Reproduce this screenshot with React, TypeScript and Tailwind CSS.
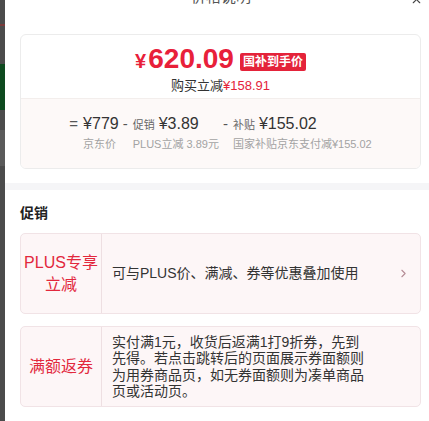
import { ChevronRight, X } from 'lucide-react'

const font = { fontFamily: '"Liberation Sans", "Noto Sans CJK SC", sans-serif' }

function PriceTerm({ sign, tag, value, note }: { sign?: string; tag?: string; value: string; note: string }) {
  return (
    <div className="flex items-start">
      {sign && <span className="mr-[5px] text-[15px] leading-[24px] text-[#555]">{sign}</span>}
      <div className="flex flex-col">
        <div className="flex items-baseline whitespace-nowrap">
          {tag && <span className="mr-[4px] text-[11px] text-[#666]">{tag}</span>}
          <span className="text-[16px] leading-[24px] text-[#333]">{value}</span>
        </div>
        <span className="whitespace-nowrap text-[11px] leading-[16px] text-[#a3a3a3]">{note}</span>
      </div>
    </div>
  )
}

function PromoRow({ label, children, arrow }: { label: React.ReactNode; children: React.ReactNode; arrow?: boolean }) {
  return (
    <div className="flex h-[81px] rounded-[5px] border border-[#f1e3e6] bg-[#fdf6f7]">
      <div className="flex w-[81px] shrink-0 items-center justify-center border-r border-[#eedfe2] text-center text-[16px] leading-[22px] text-[#e2283d]">
        {label}
      </div>
      <div className="flex flex-1 items-center pl-[10px] pr-[10px] text-[14px] text-[#333]">
        <div className="flex-1">{children}</div>
        {arrow && <ChevronRight size={13} strokeWidth={2} className="text-[#b48c95]" />}
      </div>
    </div>
  )
}

export default function App() {
  return (
    <div className="flex h-[421px] w-[429px] overflow-hidden bg-[#4b4b4b]" style={font}>
      {/* page behind the sheet */}
      <div className="flex w-[5px] shrink-0 flex-col">
        <div className="h-[24px]" />
        <div className="h-[2px] bg-[#7a3a3a]" />
        <div className="h-[38px]" />
        <div className="h-[46px] bg-[#0e4a1f]" />
        <div className="h-[20px]" />
        <div className="h-[36px] bg-[#5a5a5a]" />
      </div>

      <div className="flex flex-1 flex-col bg-white pl-[15px] pr-[8px]">
        <div className="flex h-[34px] items-start justify-between">
          <div className="w-[12px]" />
          <span className="-mt-[11px] text-[15px] leading-[16px] text-[#555]">价格说明</span>
          <X size={13} strokeWidth={2} className="-mt-[7px] -mr-[2px] text-[#444]" />
        </div>

        <div className="overflow-hidden rounded-[6px] border border-[#ececec]">
          <div className="flex h-[63px] flex-col items-center pt-[8px]">
            <div className="flex items-center">
              <span className="flex items-baseline leading-[32px] text-[#e8203a]">
                <span className="mr-[2px] text-[20px] font-bold">¥</span>
                <span className="text-[28px] font-bold">620.09</span>
              </span>
              <span className="ml-[6px] mt-[3px] rounded-[2px] bg-[#e4233a] px-[3px] text-[12px] font-bold leading-[18px] text-white">
                国补到手价
              </span>
            </div>
            <div className="-mt-[1px] text-[13px] leading-[20px] text-[#333]">
              购买立减<span className="text-[#e4233a]">¥158.91</span>
            </div>
          </div>
          <div className="flex h-[70px] justify-center border-t border-[#f3eeec] bg-[#fdf9f8] pt-[13px]">
            <div className="flex gap-[4px]">
              <PriceTerm sign="=" value="¥779" note="京东价" />
              <PriceTerm sign="-" tag="促销" value="¥3.89" note="PLUS立减 3.89元" />
              <PriceTerm sign="-" tag="补贴" value="¥155.02" note="国家补贴京东支付减¥155.02" />
            </div>
          </div>
        </div>

        <div className="-ml-[15px] -mr-[8px] mt-[14px] h-[7px] bg-[#f5f5f7]" />

        <div className="pt-[13px] text-[14px] font-bold leading-[20px] text-[#222]">促销</div>

        <div className="mt-[10px] flex flex-col gap-[12px]">
          <PromoRow
            arrow
            label={
              <span>
                PLUS专享
                <br />
                立减
              </span>
            }
          >
            可与PLUS价、满减、券等优惠叠加使用
          </PromoRow>
          <PromoRow label="满额返券">
            <p className="w-[258px] text-[14px] leading-[16.5px]">
              实付满1元，收货后返满1打9折券，先到先得。若点击跳转后的页面展示券面额则为用券商品页，如无券面额则为凑单商品页或活动页。
            </p>
          </PromoRow>
        </div>
      </div>
    </div>
  )
}
